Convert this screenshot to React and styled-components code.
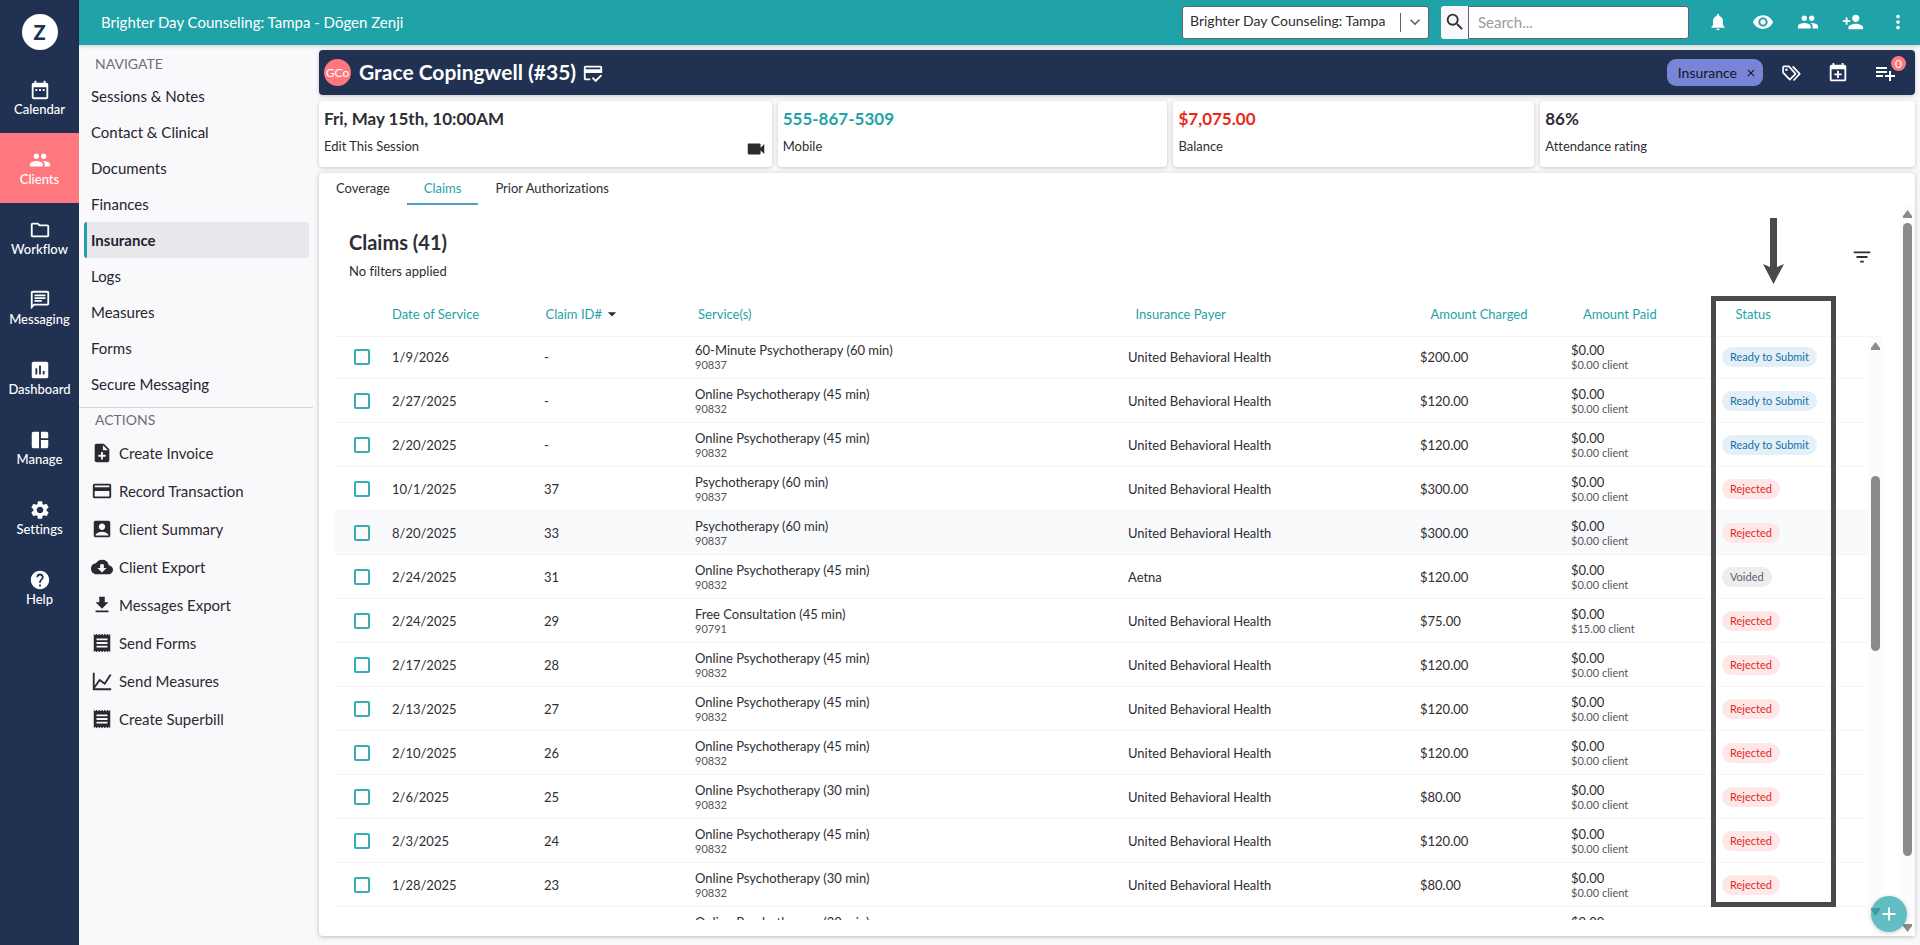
import React from 'react';
import styled, { createGlobalStyle } from 'styled-components';
import {
  MdDateRange,
  MdPeople,
  MdOutlineFolder,
  MdOutlineChat,
  MdInsertChart,
  MdSpaceDashboard,
  MdSettings,
  MdHelp,
  MdNoteAdd,
  MdPayment,
  MdAccountBox,
  MdCloudDownload,
  MdFileDownload,
  MdReceipt,
  MdNotifications,
  MdRemoveRedEye,
  MdPersonAdd,
  MdMoreVert,
  MdVideocam,
  MdPlaylistAdd,
  MdFilterList,
  MdOutlineCreditScore,
  MdArrowDropDown,
  MdAdd,
  MdSearch,
  MdClose,
  MdKeyboardArrowDown,
} from 'react-icons/md';

const ChartLineIcon = () => (
  <svg width="22" height="22" viewBox="0 0 24 24" fill="none" stroke="currentColor" strokeWidth="2">
    <path d="M3 3v18h19" />
    <path d="M3 20l6.500-9 5.500 4 6.500-10" />
  </svg>
);

const TagsIcon = () => (
  <svg width="20" height="20" viewBox="0 0 24 24" fill="none" stroke="currentColor" strokeWidth="2" strokeLinejoin="round">
    <path d="M2.500 5v6.500l8 8.500 7-7-8-9H3.500a1 1 0 0 0-1 1z" />
    <path d="M14 4l8.500 9-7.500 8" />
    <circle cx="6.500" cy="8" r="1.500" fill="currentColor" stroke="none" />
  </svg>
);

const CalendarPlusIcon = () => (
  <svg width="22" height="22" viewBox="0 0 24 24" fill="currentColor">
    <path d="M19 19V8H5v11h14M16 1h2v2h1a2 2 0 0 1 2 2v14a2 2 0 0 1-2 2H5a2 2 0 0 1-2-2V5a2 2 0 0 1 2-2h1V1h2v2h8V1m-5 8.500h2v3h3v2h-3v3h-2v-3H8v-2h3v-3z" />
  </svg>
);

const rail = [
  { label: 'Calendar', Icon: MdDateRange },
  { label: 'Clients', Icon: MdPeople, active: true },
  { label: 'Workflow', Icon: MdOutlineFolder },
  { label: 'Messaging', Icon: MdOutlineChat },
  { label: 'Dashboard', Icon: MdInsertChart },
  { label: 'Manage', Icon: MdSpaceDashboard },
  { label: 'Settings', Icon: MdSettings },
  { label: 'Help', Icon: MdHelp },
];

const pages = [
  'Sessions & Notes',
  'Contact & Clinical',
  'Documents',
  'Finances',
  'Insurance',
  'Logs',
  'Measures',
  'Forms',
  'Secure Messaging',
];

const actions = [
  { label: 'Create Invoice', Icon: MdNoteAdd },
  { label: 'Record Transaction', Icon: MdPayment },
  { label: 'Client Summary', Icon: MdAccountBox },
  { label: 'Client Export', Icon: MdCloudDownload },
  { label: 'Messages Export', Icon: MdFileDownload },
  { label: 'Send Forms', Icon: MdReceipt },
  { label: 'Send Measures', Icon: ChartLineIcon },
  { label: 'Create Superbill', Icon: MdReceipt },
];

const UBH = 'United Behavioral Health';

const claims = [
  ['1/9/2026', '-', '60-Minute Psychotherapy (60 min)', '90837', UBH, '$200.00', '$0.00 client', 'Ready to Submit'],
  ['2/27/2025', '-', 'Online Psychotherapy (45 min)', '90832', UBH, '$120.00', '$0.00 client', 'Ready to Submit'],
  ['2/20/2025', '-', 'Online Psychotherapy (45 min)', '90832', UBH, '$120.00', '$0.00 client', 'Ready to Submit'],
  ['10/1/2025', '37', 'Psychotherapy (60 min)', '90837', UBH, '$300.00', '$0.00 client', 'Rejected'],
  ['8/20/2025', '33', 'Psychotherapy (60 min)', '90837', UBH, '$300.00', '$0.00 client', 'Rejected'],
  ['2/24/2025', '31', 'Online Psychotherapy (45 min)', '90832', 'Aetna', '$120.00', '$0.00 client', 'Voided'],
  ['2/24/2025', '29', 'Free Consultation (45 min)', '90791', UBH, '$75.00', '$15.00 client', 'Rejected'],
  ['2/17/2025', '28', 'Online Psychotherapy (45 min)', '90832', UBH, '$120.00', '$0.00 client', 'Rejected'],
  ['2/13/2025', '27', 'Online Psychotherapy (45 min)', '90832', UBH, '$120.00', '$0.00 client', 'Rejected'],
  ['2/10/2025', '26', 'Online Psychotherapy (45 min)', '90832', UBH, '$120.00', '$0.00 client', 'Rejected'],
  ['2/6/2025', '25', 'Online Psychotherapy (30 min)', '90832', UBH, '$80.00', '$0.00 client', 'Rejected'],
  ['2/3/2025', '24', 'Online Psychotherapy (45 min)', '90832', UBH, '$120.00', '$0.00 client', 'Rejected'],
  ['1/28/2025', '23', 'Online Psychotherapy (30 min)', '90832', UBH, '$80.00', '$0.00 client', 'Rejected'],
  ['', '', 'Online Psychotherapy (30 min)', '', '', '', '', ''],
];

function Scroller({ before, thumb, after }) {
  return (
    <ScrollTrack aria-hidden="true">
      <ScrollArrow viewBox="0 0 9 8"><path d="M4.500 0L9 6v2H0V6z" /></ScrollArrow>
      <ScrollLane>
        <ScrollGap $size={before} />
        <ScrollThumb $size={thumb} />
        <ScrollGap $size={after} />
      </ScrollLane>
      <ScrollArrow viewBox="0 0 9 8"><path d="M4.500 8L9 2V0H0v2z" /></ScrollArrow>
    </ScrollTrack>
  );
}

function ClaimRow({ claim, hovered }) {
  const [date, id, service, code, payer, charged, clientPaid, status] = claim;
  return (
    <Row $hovered={hovered}>
      <CheckCell><Checkbox type="checkbox" aria-label={`Select claim ${date}`} /></CheckCell>
      <Cell>{date}</Cell>
      <Cell>{id}</Cell>
      <Cell>
        {service}
        <Small>{code}</Small>
      </Cell>
      <Cell>{payer}</Cell>
      <Cell>{charged}</Cell>
      <Cell>
        $0.00
        <Small>{clientPaid}</Small>
      </Cell>
      <Cell>{status && <Pill $status={status}>{status}</Pill>}</Cell>
    </Row>
  );
}

function App() {
  return (
    <Layout>
      <GlobalStyle />
      <Rail>
        <Logo>Z</Logo>
        {rail.map(({ label, Icon, active }) => (
          <RailLink key={label} href="#" $active={active}>
            <Icon size={22} />
            <span>{label}</span>
          </RailLink>
        ))}
      </Rail>
      <Page>
        <TopBar>
          <PracticeName>Brighter Day Counseling: Tampa - Dōgen Zenji</PracticeName>
          <SelectWrap>
            <PracticeSelect aria-label="Practice" defaultValue="tampa">
              <option value="tampa">Brighter Day Counseling: Tampa</option>
            </PracticeSelect>
            <Chevron><MdKeyboardArrowDown size={20} /></Chevron>
          </SelectWrap>
          <SearchForm>
            <SearchButton type="button" aria-label="Search"><MdSearch size={22} /></SearchButton>
            <SearchInput type="text" placeholder="Search..." aria-label="Search text" />
          </SearchForm>
          <TopIcons>
            <IconButton aria-label="Notifications"><MdNotifications size={20} /></IconButton>
            <IconButton aria-label="View"><MdRemoveRedEye size={22} /></IconButton>
            <IconButton aria-label="Clients"><MdPeople size={22} /></IconButton>
            <IconButton aria-label="Add client"><MdPersonAdd size={22} /></IconButton>
            <IconButton aria-label="More"><MdMoreVert size={22} /></IconButton>
          </TopIcons>
        </TopBar>
        <Body>
          <Sidebar>
            <SideHeading>NAVIGATE</SideHeading>
            {pages.map((page) => (
              <NavLink key={page} href="#" $active={page === 'Insurance'}>{page}</NavLink>
            ))}
            <Divider />
            <SideHeading>ACTIONS</SideHeading>
            {actions.map(({ label, Icon }) => (
              <ActionButton key={label}>
                <Icon size={22} />
                {label}
              </ActionButton>
            ))}
          </Sidebar>
          <Main>
            <ClientBar>
              <Avatar>GCo</Avatar>
              <ClientName>Grace Copingwell (#35)</ClientName>
              <MdOutlineCreditScore size={22} />
              <ClientTools>
                <Tag>
                  Insurance
                  <TagClose aria-label="Remove tag"><MdClose size={12} /></TagClose>
                </Tag>
                <IconButton aria-label="Tags"><TagsIcon /></IconButton>
                <IconButton aria-label="Schedule"><CalendarPlusIcon /></IconButton>
                <IconButton aria-label="Tasks">
                  <MdPlaylistAdd size={24} />
                  <Badge>0</Badge>
                </IconButton>
              </ClientTools>
            </ClientBar>
            <Cards>
              <Card>
                <CardValue>Fri, May 15th, 10:00AM</CardValue>
                <CardFooter>
                  Edit This Session
                  <MdVideocam size={22} />
                </CardFooter>
              </Card>
              <Card>
                <CardValue $color="#1fa2a8">555-867-5309</CardValue>
                <CardFooter>Mobile</CardFooter>
              </Card>
              <Card>
                <CardValue $color="#e8281c">$7,075.00</CardValue>
                <CardFooter>Balance</CardFooter>
              </Card>
              <Card>
                <CardValue>86%</CardValue>
                <CardFooter>Attendance rating</CardFooter>
              </Card>
            </Cards>
            <Panel>
              <Tabs>
                <Tab href="#">Coverage</Tab>
                <Tab href="#" $active>Claims</Tab>
                <Tab href="#">Prior Authorizations</Tab>
              </Tabs>
              <PanelBody>
                <ClaimsArea>
                  <ClaimsHeader>
                    <div>
                      <ClaimsTitle>Claims (41)</ClaimsTitle>
                      <FilterNote>No filters applied</FilterNote>
                    </div>
                    <FilterButton aria-label="Filter"><MdFilterList size={22} /></FilterButton>
                  </ClaimsHeader>
                  <Table>
                    <THead>
                      <HeadRow>
                        <HeadCell aria-label="Select" />
                        <HeadCell>Date of Service</HeadCell>
                        <HeadCell>Claim ID# <MdArrowDropDown size={20} /></HeadCell>
                        <HeadCell>Service(s)</HeadCell>
                        <HeadCell>Insurance Payer</HeadCell>
                        <HeadCell>Amount Charged</HeadCell>
                        <HeadCell>Amount Paid</HeadCell>
                        <HeadCell>Status</HeadCell>
                      </HeadRow>
                    </THead>
                    <TBody>
                      {claims.map((claim) => (
                        <ClaimRow key={claim[0] + claim[1]} claim={claim} hovered={claim[1] === '33'} />
                      ))}
                    </TBody>
                  </Table>
                  <TableScroll>
                    <Scroller before={121} thumb={176} after={253} />
                  </TableScroll>
                  <Highlight />
                  <Pointer viewBox="0 0 21 66">
                    <path d="M7 0h7v49l7-3-10.500 20L0 46l7 3z" />
                  </Pointer>
                </ClaimsArea>
                <Scroller before={0} thumb={633} after={63} />
              </PanelBody>
              <Fab aria-label="Add"><MdAdd size={22} /></Fab>
            </Panel>
          </Main>
        </Body>
      </Page>
    </Layout>
  );
}

export default App;

const GlobalStyle = createGlobalStyle`
  * {
    box-sizing: border-box;
  }

  body {
    margin: 0;
    background: #f9f9fc;
    color: #2e2e33;
    font-family: Lato, "Open Sans", sans-serif;
    font-size: 13px;
    font-variant-ligatures: none;
    line-height: 16px;
  }

  button, input, select {
    font: inherit;
    color: inherit;
  }

  svg {
    flex-shrink: 0;
  }
`

const Layout = styled.div`
  display: flex;
  height: 100vh;
  overflow: hidden;
`

const Rail = styled.nav`
  display: flex;
  flex-direction: column;
  align-items: center;
  width: 79px;
  flex-shrink: 0;
  background: #203152;
  color: #fff;
`

const Logo = styled.div`
  display: flex;
  align-items: center;
  justify-content: center;
  width: 36px;
  height: 36px;
  margin: 14px 0 13px;
  border-radius: 50%;
  background: #fff;
  color: #203152;
  font-size: 20px;
  font-weight: 900;
`

const RailLink = styled.a`
  display: flex;
  flex-direction: column;
  align-items: center;
  justify-content: center;
  width: 100%;
  height: 70px;
  background: ${({ $active }) => ($active ? '#ff787d' : 'transparent')};
  color: #fff;
  font-size: 13px;
  font-weight: 500;
  text-decoration: none;
`

const Page = styled.div`
  display: flex;
  flex-direction: column;
  flex: 1;
  min-width: 0;
`

const TopBar = styled.header`
  display: flex;
  align-items: center;
  height: 45px;
  flex-shrink: 0;
  padding: 0 11px 1px 22px;
  background: #1fa2a8;
  color: #fff;
  box-shadow: 0 1px 4px rgba(0, 0, 0, 0.2);
  z-index: 1;
`

const PracticeName = styled.div`
  flex: 1;
  font-size: 15px;
`

const SelectWrap = styled.div`
  position: relative;
  width: 247px;
  height: 33px;
`

const PracticeSelect = styled.select`
  appearance: none;
  width: 100%;
  height: 100%;
  padding: 0 36px 2px 7px;
  border: 1px solid #5f6470;
  border-radius: 3px;
  background: #fff;
  color: #2e2e33;
  font-size: 14px;
`

const Chevron = styled.span`
  position: absolute;
  top: 7px;
  right: 0;
  display: flex;
  align-items: center;
  justify-content: center;
  width: 29px;
  height: 19px;
  border-left: 1px solid #5f6470;
  color: #5f6470;
  pointer-events: none;
`

const SearchForm = styled.form`
  display: flex;
  height: 33px;
  margin-left: 12px;
`

const SearchButton = styled.button`
  display: flex;
  align-items: center;
  justify-content: center;
  width: 27px;
  padding: 0;
  border: 0;
  border-radius: 3px 0 0 3px;
  background: #f9f9fc;
  color: #2e2e33;
`

const SearchInput = styled.input`
  width: 221px;
  padding: 0 9px;
  border: 1px solid #5f6470;
  border-radius: 0 3px 3px 0;
  font-size: 15px;

  &::placeholder {
    color: #9a9a9f;
  }
`

const TopIcons = styled.div`
  display: flex;
  gap: 23px;
  margin-left: 18px;
`

const IconButton = styled.button`
  position: relative;
  display: flex;
  align-items: center;
  justify-content: center;
  width: 22px;
  height: 24px;
  padding: 0;
  border: 0;
  background: none;
  color: #fff;
`

const Body = styled.div`
  display: flex;
  flex: 1;
  min-height: 0;
`

const Sidebar = styled.aside`
  width: 234px;
  flex-shrink: 0;
  padding-top: 7px;
`

const SideHeading = styled.div`
  height: 26px;
  padding-left: 16px;
  color: #6b6e78;
  font-size: 14px;
  line-height: 24px;
`

const NavLink = styled.a`
  display: block;
  height: 36px;
  margin: 0 4px 0 5px;
  padding-left: 4px;
  border-left: 3px solid ${({ $active }) => ($active ? '#1fa2a8' : 'transparent')};
  border-radius: 3px;
  background: ${({ $active }) => ($active ? '#e8e8ec' : 'transparent')};
  color: #1f2430;
  font-size: 15px;
  font-weight: ${({ $active }) => ($active ? 700 : 400)};
  line-height: 36px;
  text-decoration: none;
`

const Divider = styled.hr`
  height: 1px;
  margin: 5px 0 0;
  border: 0;
  background: #d5d5da;
`

const ActionButton = styled.button`
  display: flex;
  align-items: center;
  gap: 6px;
  width: 100%;
  height: 38px;
  padding: 0 12px;
  border: 0;
  background: none;
  color: #2a2a2e;
  font-size: 15px;
`

const Main = styled.main`
  display: flex;
  flex-direction: column;
  gap: 6px;
  flex: 1;
  min-width: 0;
  padding: 5px 5px 9px 6px;
`

const ClientBar = styled.div`
  display: flex;
  align-items: center;
  height: 45px;
  flex-shrink: 0;
  padding: 0 19px 0 5px;
  border-radius: 4px;
  background: #203152;
  color: #fff;
  box-shadow: 0 1px 4px rgba(0, 0, 0, 0.2);
`

const Avatar = styled.div`
  display: flex;
  align-items: center;
  justify-content: center;
  width: 27px;
  height: 27px;
  border-radius: 50%;
  background: #ff787d;
  font-size: 12px;
`

const ClientName = styled.h1`
  margin: 0 6px 0 8px;
  padding-bottom: 2px;
  font-size: 21px;
  font-weight: 700;
  line-height: 24px;
`

const ClientTools = styled.div`
  display: flex;
  align-items: center;
  gap: 25px;
  margin-left: auto;
`

const Tag = styled.span`
  display: flex;
  align-items: center;
  gap: 8px;
  height: 27px;
  margin-right: -8px;
  padding: 0 6px 0 11px;
  border-radius: 9px;
  background: #7885d6;
  color: #12151f;
  font-size: 14px;
`

const TagClose = styled.button`
  display: flex;
  padding: 0;
  border: 0;
  background: none;
`

const Badge = styled.span`
  position: absolute;
  top: -5px;
  right: -10px;
  width: 15px;
  height: 15px;
  border-radius: 50%;
  background: #ff787d;
  font-size: 12px;
  line-height: 15px;
  text-align: center;
`

const Cards = styled.div`
  display: grid;
  grid-template-columns: 453fr 390fr 361fr 375fr;
  gap: 6px;
`

const Card = styled.section`
  height: 66px;
  padding: 7px 5px 0;
  border-radius: 4px;
  background: #fff;
  box-shadow: 0 1px 4px rgba(0, 0, 0, 0.2);
`

const CardValue = styled.div`
  color: ${({ $color }) => $color || '#2e2e33'};
  font-size: 17px;
  font-weight: 700;
  line-height: 22px;
`

const CardFooter = styled.div`
  display: flex;
  justify-content: space-between;
  padding-top: 8px;

  svg {
    color: #2a2a2e;
  }
`

const Panel = styled.section`
  position: relative;
  display: flex;
  flex-direction: column;
  flex: 1;
  min-height: 0;
  border-radius: 4px;
  background: #fff;
  box-shadow: 0 1px 4px rgba(0, 0, 0, 0.25);
`

const Tabs = styled.nav`
  display: flex;
  height: 32px;
`

const Tab = styled.a`
  padding: 7px 17px;
  border-bottom: 2px solid ${({ $active }) => ($active ? '#4f9fc4' : 'transparent')};
  color: ${({ $active }) => ($active ? '#1fa2a8' : '#2e2e33')};
  text-decoration: none;
`

const PanelBody = styled.div`
  display: flex;
  flex: 1;
  min-height: 0;
`

const ClaimsArea = styled.div`
  position: relative;
  display: grid;
  grid-template-columns: minmax(0, 1fr) 15px;
  grid-template-rows: 86px 46px minmax(0, 1fr);
  flex: 1;
  margin: 0 17px 16px 16px;
`

const ClaimsHeader = styled.div`
  display: flex;
  justify-content: space-between;
  align-items: flex-start;
  grid-column: 1 / 3;
  padding: 24px 10px 0 14px;
`

const ClaimsTitle = styled.h2`
  margin: 0 0 8px;
  font-size: 20px;
  font-weight: 700;
  line-height: 26px;
`

const FilterNote = styled.div`
  line-height: 16px;
`

const FilterButton = styled.button`
  display: flex;
  margin-top: 17px;
  padding: 0;
  border: 0;
  background: none;
`

const Table = styled.table`
  display: contents;
`

const THead = styled.thead`
  display: block;
  grid-column: 1 / 3;
  border-bottom: 1px solid #f5f5f8;
`

const HeadRow = styled.tr`
  display: grid;
  grid-template-columns: 57px 152fr 151fr 433fr 292fr 151fr 151fr 146fr;
`

const HeadCell = styled.th`
  display: flex;
  align-items: center;
  height: 45px;
  padding: 0;
  color: #1fa2a8;
  font-weight: 400;

  svg {
    color: #2e2e33;
  }
`

const TBody = styled.tbody`
  display: block;
  overflow: hidden;
`

const Row = styled.tr`
  display: grid;
  grid-template-columns: 57px 152fr 151fr 433fr 292fr 151fr 151fr 146fr;
  height: 44px;
  border-bottom: 1px solid #f5f5f8;
  background: ${({ $hovered }) => ($hovered ? '#f9fafc' : 'transparent')};

  &:first-child {
    margin-top: -2px;
  }
`

const Cell = styled.td`
  display: flex;
  flex-direction: column;
  align-items: flex-start;
  justify-content: center;
  padding: 0;
  white-space: nowrap;
`

const CheckCell = styled(Cell)`
  padding-left: 19px;
`

const Checkbox = styled.input`
  appearance: none;
  width: 16px;
  height: 16px;
  margin: 0;
  border: 2px solid #36adb2;
  border-radius: 2px;
`

const Small = styled.span`
  min-height: 14px;
  color: #55555c;
  font-size: 11px;
  line-height: 14px;
`

const pillColors = {
  'Ready to Submit': ['#e5eff7', '#1272a8'],
  Rejected: ['#fde8e7', '#e5281c'],
  Voided: ['#ededf0', '#5f6068'],
}

const Pill = styled.span`
  height: 20px;
  padding: 0 8px;
  border-radius: 10px;
  background: ${({ $status }) => pillColors[$status][0]};
  color: ${({ $status }) => pillColors[$status][1]};
  font-size: 11px;
  line-height: 20px;
`

const ScrollTrack = styled.div`
  display: flex;
  flex-direction: column;
  align-items: center;
  gap: 5px;
  width: 15px;
  height: 100%;
  padding: 5px 0 4px;
  background: #fcfcfc;
`

const ScrollArrow = styled.svg`
  width: 9px;
  height: 8px;
  fill: #8b8b8b;
`

const ScrollLane = styled.div`
  display: flex;
  flex-direction: column;
  flex: 1;
`

const ScrollGap = styled.div`
  flex: ${({ $size }) => $size} 0 0;
`

const ScrollThumb = styled.div`
  flex: ${({ $size }) => $size} 0 0;
  width: 9px;
  border-radius: 5px;
  background: #8b8b8b;
`

const TableScroll = styled.div`
  min-height: 0;
`

const Highlight = styled.div`
  position: absolute;
  top: 91px;
  right: 47px;
  bottom: 13px;
  width: 125px;
  border: 5px solid #4a4a4a;
  pointer-events: none;
`

const Pointer = styled.svg`
  position: absolute;
  top: 13px;
  right: 99px;
  width: 21px;
  height: 66px;
  fill: #4a4a4a;
`

const Fab = styled.button`
  position: absolute;
  right: 8px;
  bottom: 4px;
  display: flex;
  align-items: center;
  justify-content: center;
  width: 36px;
  height: 36px;
  padding: 0;
  border: 0;
  border-radius: 50%;
  background: rgba(31, 162, 168, 0.7);
  color: #fff;
  box-shadow: 0 1px 4px rgba(0, 0, 0, 0.2);
`
